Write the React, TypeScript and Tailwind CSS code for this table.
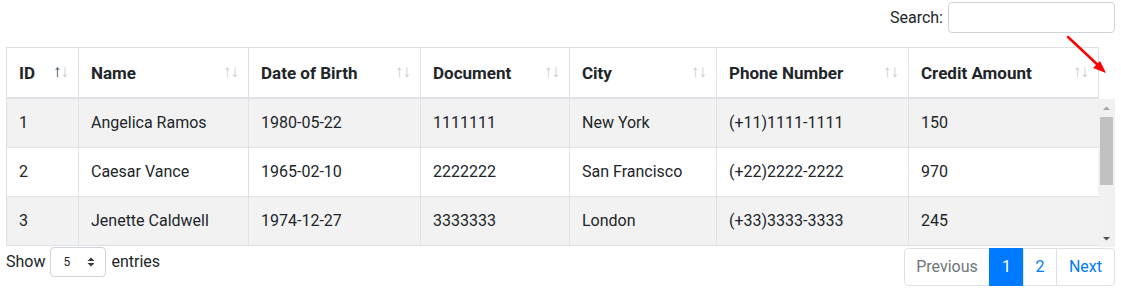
const font = { fontFamily: '"Segoe UI", Roboto, "Liberation Sans", sans-serif' }

const columns = [
    { label: "ID", width: "w-[72px]", active: true },
    { label: "Name", width: "w-[170px]" },
    { label: "Date of Birth", width: "w-[172px]" },
    { label: "Document", width: "w-[149px]" },
    { label: "City", width: "w-[147px]" },
    { label: "Phone Number", width: "w-[192px]" },
    { label: "Credit Amount", width: "w-[190px]" },
]

const rows = [
    ["1", "Angelica Ramos", "1980-05-22", "1111111", "New York", "(+11)1111-1111", "150"],
    ["2", "Caesar Vance", "1965-02-10", "2222222", "San Francisco", "(+22)2222-2222", "970"],
    ["3", "Jenette Caldwell", "1974-12-27", "3333333", "London", "(+33)3333-3333", "245"],
]

function ColGroup() {
    return (
        <colgroup>
            {columns.map((c) => (
                <col key={c.label} className={c.width} />
            ))}
        </colgroup>
    )
}

function SortIcons({ active }: { active?: boolean }) {
    return (
        <span className="absolute right-[9px] top-[11px] flex text-[17px] font-normal leading-6">
            <span className={active ? "text-[#1d3a5c]" : "text-[#c4c8cc]"}>↑</span>
            <span className="-ml-[1px] text-[#c4c8cc]">↓</span>
        </span>
    )
}

function FakeScrollbar() {
    return (
        <div className="flex w-[17px] flex-col items-center bg-[#f1f1f1]">
            <svg width="17" height="15" viewBox="0 0 17 15" className="mt-[2px]">
                <path d="M5 9 L8.5 5.5 L12 9 Z" fill="#a3a3a3" />
            </svg>
            <div className="mt-[1px] h-[68px] w-[13px] bg-[#c1c1c1]" />
            <div className="flex-1" />
            <svg width="17" height="15" viewBox="0 0 17 15" className="mb-[1px]">
                <path d="M5 6 L8.5 9.5 L12 6 Z" fill="#505050" />
            </svg>
        </div>
    )
}

function App() {
    return (
        <div className="relative h-[289px] w-[1121px] overflow-hidden bg-white text-[#212529]" style={font}>
            <div className="px-[6px]">
                <div className="flex items-center justify-end gap-[5px] pt-[2px]">
                    <span className="text-[16px]">Search:</span>
                    <div className="h-[31px] w-[167px] rounded-[4px] border border-[#ced4da] bg-white" />
                </div>

                <div className="mt-[14px] w-[1109px]">
                    <table className="w-[1092px] table-fixed border-collapse">
                        <ColGroup />
                        <thead>
                            <tr>
                                {columns.map((c) => (
                                    <th
                                        key={c.label}
                                        className="relative h-[50px] border border-b-2 border-[#dee2e6] pl-3 pr-[30px] pt-[1px] text-left text-[17px] font-bold leading-6"
                                    >
                                        {c.label}
                                        <SortIcons active={c.active} />
                                    </th>
                                ))}
                            </tr>
                        </thead>
                    </table>
                    <div className="flex h-[148px]">
                        <div className="w-[1092px] overflow-hidden">
                            <table className="w-[1092px] table-fixed border-collapse">
                                <ColGroup />
                                <tbody>
                                    {rows.map((r, i) => (
                                        <tr key={r[0]} className={i % 2 === 0 ? "bg-[#f2f2f2]" : "bg-white"}>
                                            {r.map((v, j) => (
                                                <td
                                                    key={j}
                                                    className={`border border-[#dee2e6] px-3 py-3 text-[16px] leading-6 ${i === 0 ? "border-t-0" : ""}`}
                                                >
                                                    {v}
                                                </td>
                                            ))}
                                        </tr>
                                    ))}
                                </tbody>
                            </table>
                        </div>
                        <FakeScrollbar />
                    </div>
                </div>

                <div className="flex items-start justify-between">
                    <div className="flex items-center gap-[5px] text-[16px]">
                        <span>Show</span>
                        <div className="flex h-[30px] w-[56px] items-center justify-between rounded-[4px] border border-[#ced4da] pl-[12px] pr-[10px]">
                            <span className="text-[12px]">5</span>
                            <svg width="8" height="12" viewBox="0 0 8 12">
                                <path d="M0.5 5 L4 1.5 L7.5 5 Z M0.5 7 L4 10.5 L7.5 7 Z" fill="#343a40" />
                            </svg>
                        </div>
                        <span>entries</span>
                    </div>
                    <div className="mt-[1px] flex h-[38px] text-[16px]">
                        <div className="flex w-[86px] items-center justify-center rounded-l-[4px] border border-[#dee2e6] text-[#6c757d]">
                            Previous
                        </div>
                        <div className="-ml-px flex w-[35px] items-center justify-center border border-[#007bff] bg-[#007bff] text-white">
                            1
                        </div>
                        <div className="-ml-px flex w-[34px] items-center justify-center border border-[#dee2e6] text-[#007bff]">
                            2
                        </div>
                        <div className="-ml-px flex w-[59px] items-center justify-center rounded-r-[4px] border border-[#dee2e6] text-[#007bff]">
                            Next
                        </div>
                    </div>
                </div>
            </div>

            <svg className="absolute left-[1060px] top-[30px]" width="56" height="52" viewBox="0 0 56 52">
                <line x1="8" y1="7" x2="40" y2="37" stroke="#ff0000" strokeWidth="2.5" strokeLinecap="round" />
                <path d="M46 43 L33 38 L40 31 Z" fill="#ff0000" />
            </svg>
        </div>
    )
}

export default App
